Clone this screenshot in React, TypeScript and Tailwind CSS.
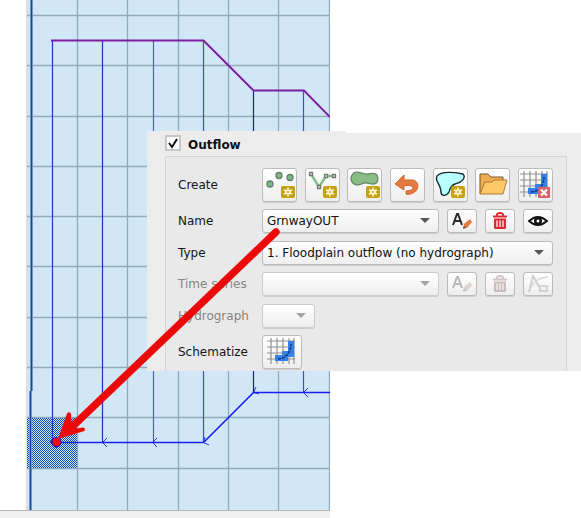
import React, { useState } from 'react';
import type { ReactNode } from 'react';

const gridX = [77, 127, 178, 228, 278, 329];
const gridY = [15, 65, 116, 166, 216, 266, 317, 367, 417, 468];
const sections = [
  { x: 52, top: 40, bottom: 442, color: '#2436c4' },
  { x: 102, top: 40, bottom: 442, color: '#2030c8' },
  { x: 153, top: 40, bottom: 442, color: '#4a5cd8' },
  { x: 203, top: 40, bottom: 442, color: '#3a50c8' },
  { x: 253, top: 90, bottom: 392, color: '#1420a8' },
  { x: 303, top: 90, bottom: 392, color: '#3a50d0' },
];

function MapCanvas() {
  return (
    <svg className="block h-[510px] w-[330px]" viewBox="0 0 330 510" aria-label="Flow grid map">
      <defs>
        <pattern id="stipple" width="2" height="2" patternUnits="userSpaceOnUse">
          <path d="M0 0h1v1h-1zM1 1h1v1h-1z" fill="#0a4cb4" shapeRendering="crispEdges" />
        </pattern>
      </defs>
      <rect x="27" width="303" height="510" fill="#d2e7f6" />
      <rect x="26" width="2" height="510" fill="#dedede" />
      <g stroke="#91aabb" strokeWidth="1.3">
        {gridX.map((x) => <path key={x} d={`M${x + 0.5} 0V510`} />)}
        {gridY.map((y) => <path key={y} d={`M27 ${y + 0.5}H330`} />)}
      </g>
      <rect x="27" y="418" width="50" height="50" fill="url(#stipple)" />
      <path d="M31.5 0V391M30.5 391V510" stroke="#87aad8" strokeWidth="3" />
      <path d="M31.5 0V391M30.5 391V510" stroke="#114aa0" strokeWidth="1.4" />
      {sections.map((s) => (
        <path key={s.x} d={`M${s.x + 0.5} ${s.top}V${s.bottom}`} stroke={s.color} strokeWidth="1.2" />
      ))}
      <path d="M51 40.5H203.5L253.5 90.5H304L330 117" fill="none" stroke="#7d1ba5" strokeWidth="1.9" />
      <g fill="none" stroke="#1620f2">
        <path d="M56 442.5H203.5L253.5 392.5H330" strokeWidth="1.6" />
        <path d="M107 438L102.5 442.5L107 447M157 438L152.5 442.5L157 447M205 437L203.5 442.5L209 445M256 387L253.5 392.5L259 394M308 388L303.5 392.5L308 397" strokeWidth="0.9" />
      </g>
    </svg>
  );
}

function Badge({ x, y }: { x: number; y: number }) {
  return (
    <g transform={`translate(${x} ${y})`}>
      <rect width="14" height="12" rx="2" fill="#c6a212" />
      <path d="M7 1.5v9M3 3.7l8 4.6M11 3.7l-8 4.6" stroke="#fff6d0" strokeWidth="1.6" />
      <circle cx="7" cy="6" r="2.8" fill="#fff6d0" />
      <circle cx="7" cy="6" r="1" fill="#c6a212" />
    </g>
  );
}

function PointsIcon() {
  return (
    <svg className="size-8" viewBox="0 0 32 32">
      <g fill="#83b688" stroke="#64806b" strokeWidth="1.3">
        <circle cx="6" cy="15" r="3" /><circle cx="15" cy="6.5" r="3" /><circle cx="26" cy="8.5" r="3" />
      </g>
      <Badge x={17} y={17} />
    </svg>
  );
}
function LineIcon() {
  return (
    <svg className="size-8" viewBox="0 0 32 32">
      <path d="M5 5l8 13 7-11h8" fill="none" stroke="#83bd88" strokeWidth="2.4" />
      <g fill="#ddd" stroke="#777" strokeWidth="1.3"><path d="M3.5 3.5h3v3h-3zM11.5 16.5h3v3h-3zM18.5 5.5h3v3h-3zM26.5 5.5h3v3h-3z" /></g>
      <Badge x={17} y={17} />
    </svg>
  );
}
function PolygonIcon() {
  return (
    <svg className="size-8" viewBox="0 0 32 32">
      <path d="M3 6C6 1 11 4 16 5c5 1 9-3 12 1 2 4 1 9-4 9-4 0-5-2-9-1-4 2-9 3-12-1Q1 9 3 6z" fill="#8bbd86" stroke="#668a65" strokeWidth="1.3" />
      <Badge x={17} y={17} />
    </svg>
  );
}
function UndoIcon() {
  return (
    <svg className="size-8" viewBox="0 0 32 32">
      <path d="M4 15L13 6v5h8c8 0 9 13-4 14.500l-2-.5v-3q7-.5 7-3t-4-2.500h-5v4.500z" fill="#e37a42" stroke="#d9652b" strokeLinejoin="round" />
    </svg>
  );
}
function BasinIcon() {
  return (
    <svg className="size-8" viewBox="0 0 32 32">
      <path d="M3 7C7 2 22 3 29 5c3 3 0 8-8 10-5 2-5 5-6 8-3 5-8 4-8 0 0-5-2-7-4-11q-1-3 0-5z" fill="#b8ffff" stroke="#182e30" strokeWidth="1.4" />
      <Badge x={17} y={17} />
    </svg>
  );
}
function FolderIcon() {
  return (
    <svg className="size-8" viewBox="0 0 32 32">
      <path d="M3 25V5h8l3 3h12v6" fill="#edae50" stroke="#795828" />
      <path d="M3 25L8 13h7l2-2h13l-4 14z" fill="#ffc966" stroke="#a87837" strokeLinejoin="round" />
    </svg>
  );
}
function GridIcon({ removable = false }: { removable?: boolean }) {
  return (
    <svg className="size-8" viewBox="0 0 32 32">
      <path d="M1 5h28M1 11h28M1 17h28M1 23h28M5 2v26M11 2v26M17 2v26M23 2v26M28 2v26" stroke="#929292" strokeWidth="1.2" />
      <path d="M22 5h6v16h-6v4H9v-6h7v-4h6z" fill="#3680ee" />
      <path d="M12 23q12-1 13-15" fill="none" stroke="#163769" strokeWidth="1.6" strokeDasharray="3 1" />
      {removable && <g><rect x="19" y="18" width="12" height="11" rx="1" fill="#dc6268" /><path d="M22 20.500l6 6M28 20.500l-6 6" stroke="white" strokeWidth="2.2" /></g>}
    </svg>
  );
}
function EditIcon() {
  return (
    <svg className="h-5 w-6" viewBox="0 0 24 20">
      <path d="M3 14L7 3h1l4 11M5 10h6" fill="none" stroke="#282828" strokeWidth="2" />
      <path d="M13 17l1-4 6-5 2 3-5 6z" fill="#e07a3e" /><path d="M13 18l1-3 2 2z" fill="#555" />
    </svg>
  );
}
function TrashIcon() {
  return (
    <svg className="h-5 w-6" viewBox="0 0 24 20">
      <path d="M5 5.500h14M9 5V3q3-2 6 0v2" fill="none" stroke="#dc2934" strokeWidth="1.8" />
      <path d="M6 7.500h12V17q0 1-1 1H7q-1 0-1-1z" fill="#dc2934" />
      <path d="M9 9.500v6.500M12 9.500v6.500M15 9.500v6.500" stroke="#f8e8e8" strokeWidth="1.4" />
    </svg>
  );
}
function EyeIcon() {
  return (
    <svg className="h-5 w-6" viewBox="0 0 24 20">
      <path d="M3 10q9-8 18 0-9 8-18 0z" fill="none" stroke="#111" strokeWidth="1.8" />
      <circle cx="12" cy="10" r="4" fill="#111" /><circle cx="12" cy="10" r="1.500" fill="white" />
    </svg>
  );
}
function CurveIcon() {
  return (
    <svg className="h-5 w-6" viewBox="0 0 24 20">
      <path d="M3 18L7 2l8 14" fill="none" stroke="#777" strokeWidth="2" />
      <path d="M3 18Q7 4 22 3" fill="none" stroke="#8c8cc0" strokeWidth="1.5" />
      <path d="M14 12h7v5h-7z" fill="#eee" stroke="#8c8a66" strokeWidth="2" />
    </svg>
  );
}

const surface = 'flex items-center justify-center rounded-[3px] border border-[#bcbcbc] bg-linear-to-b from-white to-[#eeeeee] shadow-[0_1px_0_#cccccc]';

function ToolButton({ label, children, wide = false }: { label: string; children: ReactNode; wide?: boolean }) {
  return <button type="button" aria-label={label} className={`${surface} h-[34px] ${wide ? 'w-10' : 'w-[35px]'}`}>{children}</button>;
}
function SmallButton({ label, children, disabled = false }: { label: string; children: ReactNode; disabled?: boolean }) {
  return (
    <button type="button" aria-label={label} disabled={disabled} className={`${surface} h-6 w-[30px] shrink-0`}>
      <span className={disabled ? 'opacity-30 grayscale-75' : ''}>{children}</span>
    </button>
  );
}
function Dropdown({ id, value, disabled = false }: { id: string; value: string; disabled?: boolean }) {
  return (
    <div className="relative min-w-0 flex-1">
      <select id={id} disabled={disabled} className="block h-6 w-full appearance-none rounded-[3px] border border-[#bcbcbc] bg-linear-to-b from-white to-[#eeeeee] pr-6 pl-1 text-[#111] shadow-[0_1px_0_#cccccc] disabled:border-[#cccccc] disabled:opacity-100">
        <option>{value}</option>
      </select>
      <svg className={`pointer-events-none absolute top-[9px] right-[9px] h-[5px] w-[10px] ${disabled ? 'text-[#a5a5a5]' : 'text-[#555]'}`} viewBox="0 0 10 5"><path d="M0 0h10L5 5z" fill="currentColor" /></svg>
    </div>
  );
}
function Label({ id, children, muted = false }: { id?: string; children: ReactNode; muted?: boolean }) {
  const style = `w-[84px] shrink-0 ${muted ? 'text-[#858585]' : 'text-[#151515]'}`;
  return id ? <label htmlFor={id} className={style}>{children}</label> : <span className={style}>{children}</span>;
}

export default function App() {
  const [enabled, setEnabled] = useState(true);
  return (
    <main className="relative overflow-hidden bg-white font-['DejaVu_Sans',sans-serif] text-[12px] leading-4">
      <MapCanvas />
      <div className="h-2 w-[330px] border-t border-[#b5b5b5] bg-[#f0f0f0]" />
      <section className="absolute top-[131px] right-0 left-[147px] bg-[#ececec]">
        <div className="flex h-0.5"><span className="w-[199px]" /><span className="flex-1 bg-white" /></div>
        <div className="flex h-[238px] flex-col pr-[14px] pl-[18px]">
          <label className="flex h-[23px] shrink-0 items-center gap-[7px] font-bold text-[#111]">
            <span className="relative mb-1 size-4">
              <input type="checkbox" checked={enabled} onChange={(e) => setEnabled(e.target.checked)} className="block size-4 appearance-none border-2 border-[#c7c7c7] bg-white" />
              {enabled && <svg className="pointer-events-none absolute inset-0" viewBox="0 0 16 16"><path d="M4 8l3 4 5-8" fill="none" stroke="#111" strokeWidth="2" /></svg>}
            </span>
            Outflow
          </label>
          <div className="flex flex-1 flex-col rounded-t-[2px] border border-b-0 border-[#d4d4d4] bg-[#e9e9e9] pt-[11px] pr-[13px] pl-3">
            <div className="flex items-center"><Label>Create</Label>
              <div className="flex flex-1 justify-between">
                <ToolButton label="Create points"><PointsIcon /></ToolButton>
                <ToolButton label="Create line"><LineIcon /></ToolButton>
                <ToolButton label="Create polygon"><PolygonIcon /></ToolButton>
                <ToolButton label="Undo"><UndoIcon /></ToolButton>
                <ToolButton label="Create boundary"><BasinIcon /></ToolButton>
                <ToolButton label="Open"><FolderIcon /></ToolButton>
                <ToolButton label="Clear schematized grid"><GridIcon removable /></ToolButton>
              </div>
            </div>
            <div className="mt-[7px] flex items-center"><Label id="name">Name</Label>
              <div className="flex flex-1 gap-2"><Dropdown id="name" value="GrnwayOUT" /><SmallButton label="Rename outflow"><EditIcon /></SmallButton><SmallButton label="Delete outflow"><TrashIcon /></SmallButton><SmallButton label="Show outflow"><EyeIcon /></SmallButton></div>
            </div>
            <div className="mt-2 flex items-center"><Label id="type">Type</Label><Dropdown id="type" value="1. Floodplain outflow (no hydrograph)" /></div>
            <div className="mt-[7px] flex items-center"><Label id="series" muted>Time series</Label>
              <div className="flex flex-1 gap-2"><Dropdown id="series" value="" disabled /><SmallButton label="Rename series" disabled><EditIcon /></SmallButton><SmallButton label="Delete series" disabled><TrashIcon /></SmallButton><SmallButton label="Plot series" disabled><CurveIcon /></SmallButton></div>
            </div>
            <div className="mt-2 flex items-center"><Label id="hydrograph" muted>Hydrograph</Label><div className="flex w-[53px]"><Dropdown id="hydrograph" value="" disabled /></div></div>
            <div className="mt-[7px] flex items-center"><Label>Schematize</Label><ToolButton label="Schematize" wide><GridIcon /></ToolButton></div>
          </div>
        </div>
      </section>
      <svg className="pointer-events-none absolute top-0 left-0 h-[518px] w-[330px]" viewBox="0 0 330 518">
        <path d="M50 442l3-4 3-1 4 1 2 4-2 4-4 2-3-2z" fill="#1212dc" />
        <path d="M276 232L74 425" stroke="#ec0909" strokeWidth="7.4" strokeLinecap="round" />
        <path d="M58 439L67 413.500q2-2.500 4 0l.5 9 5.500 6 6-1q3 1 1.500 3.500z" fill="#ec0909" />
        <circle cx="56.500" cy="442" r="4" fill="#ff0000" />
      </svg>
    </main>
  );
}
